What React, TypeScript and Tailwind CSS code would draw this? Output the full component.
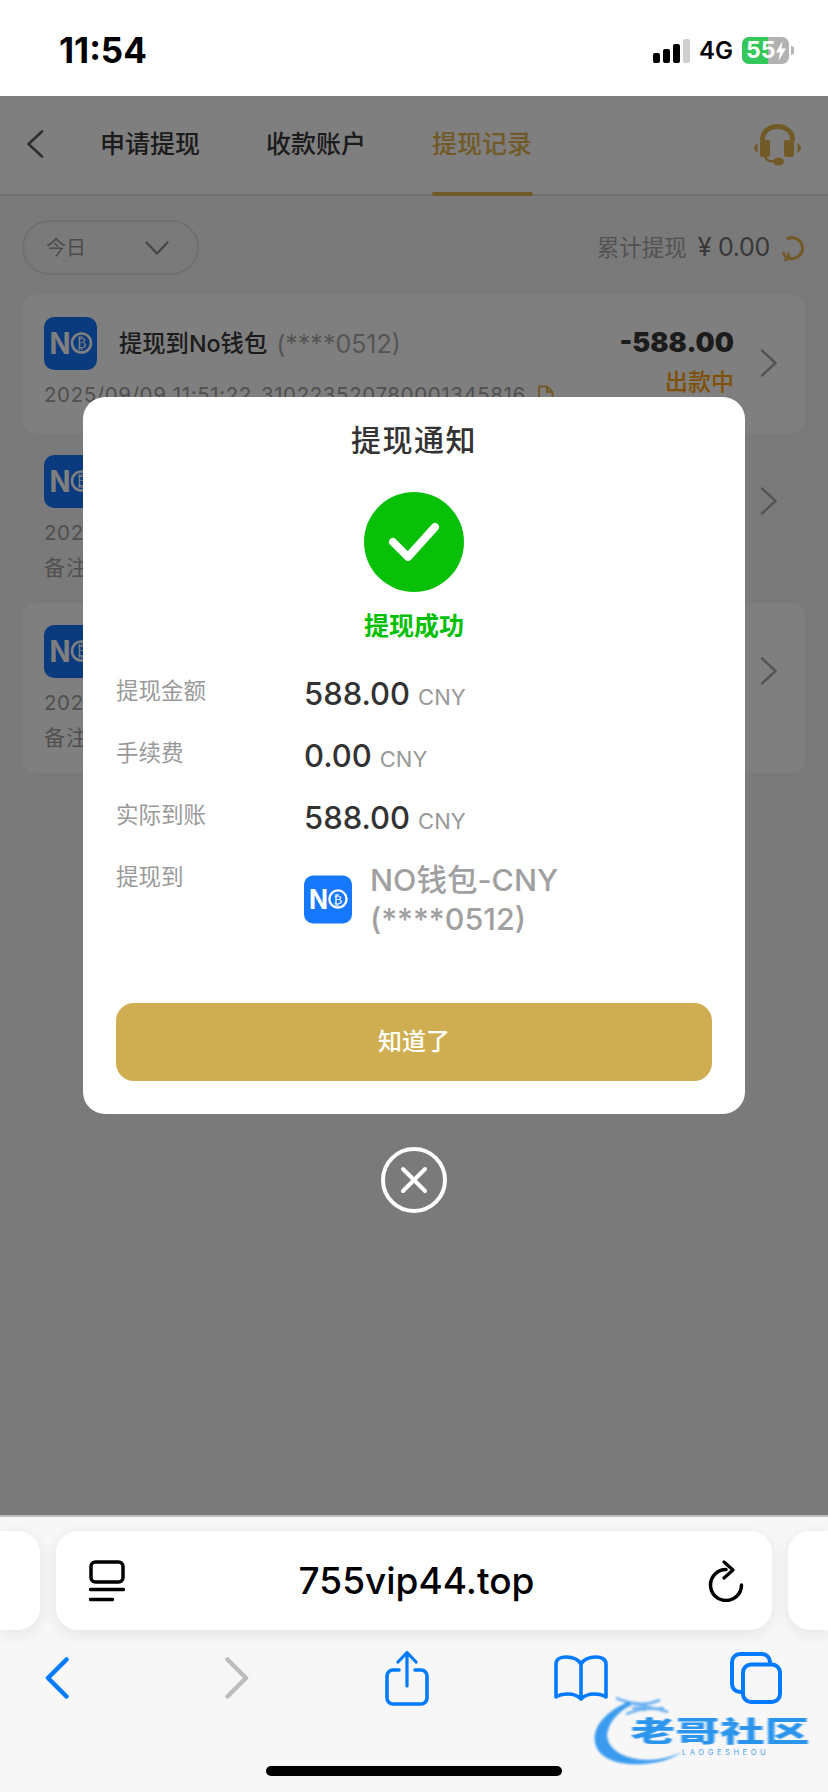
const records = [
  { date: '2025/09/09 11:51:22', no: '310223520780001345816', note: '', striped: true },
  { date: '2025', no: 'second', note: '备注', striped: false },
  { date: '2025', no: 'third', note: '备注', striped: true },
]

const details = [
  { label: '提现金额', value: '588.00' },
  { label: '手续费', value: '0.00' },
  { label: '实际到账', value: '588.00' },
]

function NoLogo({ className }: { className: string }) {
  return (
    <svg viewBox="0 0 53 53" className={className}>
      <rect width="53" height="53" rx="10" fill="#1677ff" />
      <text x="5.5" y="37" textLength="21" lengthAdjust="spacingAndGlyphs" fontFamily="Inter" fontWeight="700" fontSize="30" fill="#fff">
        N
      </text>
      <circle cx="37.5" cy="26" r="9.5" fill="none" stroke="#fff" strokeWidth="2.6" />
      <text x="37.5" y="31" textAnchor="middle" fontFamily="DejaVu Sans" fontSize="14" fill="#fff">
        ₿
      </text>
    </svg>
  )
}

function StatusBar() {
  return (
    <div className="h-[96px] shrink-0 bg-white flex items-center justify-between pl-[59px] pr-[34px] pt-[5px]">
      <span className="text-[35px] font-bold text-black">11:54</span>
      <div className="flex items-center">
        <div className="flex items-end gap-[3px] h-[24px]">
          <div className="w-[7px] h-[10px] rounded-[2px] bg-black" />
          <div className="w-[7px] h-[14px] rounded-[2px] bg-black" />
          <div className="w-[7px] h-[19px] rounded-[2px] bg-black" />
          <div className="w-[7px] h-[24px] rounded-[2px] bg-[#cfcfcf]" />
        </div>
        <span className="ml-[9px] text-[24px] font-semibold text-black">4G</span>
        <div className="ml-[9px] relative w-[47px] h-[27px] rounded-[7px] bg-[#b2b2b2] overflow-hidden flex items-center">
          <div className="absolute inset-y-0 left-0 w-[26px] bg-[#34c759]" />
          <span className="relative pl-[4px] text-[23px] leading-none font-bold text-white">55</span>
          <svg viewBox="0 0 12 20" className="relative w-[12px] h-[20px]">
            <path d="M7.5 0 1 11.5h4L3.5 20 11 7.5H6.5z" fill="#fff" />
          </svg>
        </div>
        <div className="ml-[2px] w-[3px] h-[9px] rounded-r-[3px] bg-[#b2b2b2]" />
      </div>
    </div>
  )
}

function Header() {
  return (
    <div className="h-[100px] shrink-0 bg-white border-b-2 border-[#e2e2e2] flex items-center relative">
      <svg viewBox="0 0 18 28" className="absolute left-[26px] top-[34px] w-[18px] h-[28px]">
        <path d="M16 1.5 2.5 14 16 26.5" fill="none" stroke="#5c5c5c" strokeWidth="2.6" strokeLinecap="round" strokeLinejoin="round" />
      </svg>
      <div className="pl-[100px] flex gap-[66px] text-[25px] font-medium text-[#383838] h-full items-center">
        <span>申请提现</span>
        <span>收款账户</span>
        <div className="relative h-full flex items-center w-[101px] text-[#e4b450]">
          <span>提现记录</span>
          <div className="absolute left-0 right-0 bottom-[-2px] h-[4px] rounded-full bg-[#e4b450]" />
        </div>
      </div>
      <svg viewBox="0 0 47 42" className="absolute left-[754px] top-[28px] w-[47px] h-[42px]" fill="#e4b450">
        <path d="M8.5 17v-2a15 12.5 0 0 1 30 0v2" fill="none" stroke="#e4b450" strokeWidth="5" />
        <rect x="6" y="16" width="10" height="17" rx="2" />
        <rect x="30" y="16" width="10" height="17" rx="2" />
        <path d="M3.5 19C1 21 0 23 0 24s1 3 3.500 5z" />
        <path d="M43.500 19c2.500 2 3.500 4 3.500 5s-1 3-3.500 5z" />
        <path d="M11 31c0 5 3 6.500 9 6.500" fill="none" stroke="#e4b450" strokeWidth="2.500" strokeLinecap="round" />
        <ellipse cx="24.500" cy="37.500" rx="5.500" ry="4" />
      </svg>
    </div>
  )
}

function FilterRow() {
  return (
    <div className="h-[99px] shrink-0 flex items-center justify-between pl-[22px] pr-[23px] pt-[4px]">
      <div className="w-[177px] h-[55px] rounded-full border-2 border-[#e0e0e0] flex items-center pl-[22px] pr-[28px] justify-between text-[20px] text-[#999]">
        <span>今日</span>
        <svg viewBox="0 0 24 14" className="w-[24px] h-[14px]">
          <path d="M1.500 1.500 12 12.500 22.500 1.500" fill="none" stroke="#888" strokeWidth="2.200" strokeLinecap="round" strokeLinejoin="round" />
        </svg>
      </div>
      <div className="flex items-center text-[#a6a6a6]">
        <span className="text-[22.500px]">累计提现</span>
        <span className="ml-[11px] text-[25px] text-[#707070] tracking-[-0.3px]">¥ 0.00</span>
        <svg viewBox="0 0 24 26" className="ml-[11px] w-[24px] h-[26px]">
          <path d="M7 3.500A10.500 10.500 0 1 1 9 23.500" fill="none" stroke="#e4b450" strokeWidth="3" strokeLinecap="round" />
          <path d="M2.500 18c.5 2 1.500 3.500 3.500 4.500M4 25l5-1.500-2-5" fill="none" stroke="#e4b450" strokeWidth="2.600" strokeLinecap="round" />
        </svg>
      </div>
    </div>
  )
}

function RecordCard({ date, no, note, striped }: (typeof records)[number]) {
  return (
    <div
      className={`relative ml-[22px] mr-[23px] rounded-[14px] pl-[22px] pt-[22px] ${note ? 'h-[170px]' : 'h-[138px]'} ${striped ? 'bg-white' : ''}`}
    >
      <div className="flex items-center">
        <NoLogo className="w-[53px] h-[53px] shrink-0" />
        {!note && (
          <div className="flex items-center pt-[2px]">
            <span className="ml-[22px] text-[23.300px] font-medium text-[#383838]">提现到No钱包</span>
            <span className="ml-[9px] text-[25px] text-[#aaa]">(****0512)</span>
          </div>
        )}
      </div>
      <div className="mt-[11px] flex items-center text-[20.500px] leading-[28px] tracking-[0.6px] text-[#a0a0a0]">
        <span>{date}</span>
        {!note && (
          <>
            <span className="ml-[9px]">{no}</span>
            <svg viewBox="0 0 17 20" className="ml-[11px] w-[17px] h-[20px]">
              <path d="M2 1.500h8l5.500 5.500v11.500H2zM10 1.500V7h5.500" fill="none" stroke="#e4b450" strokeWidth="2" />
            </svg>
          </>
        )}
      </div>
      {note && <div className="mt-[7px] text-[21px] leading-[28px] tracking-[1px] text-[#a0a0a0]">{note}</div>}
      {!note && (
        <>
          <div className="absolute right-[71px] top-[31px] text-[27px] leading-[34px] font-black text-[#383838]">-588.00</div>
          <div className="absolute right-[71px] top-[72px] text-[23px] leading-[30px] font-medium text-[#ffa000]">出款中</div>
        </>
      )}
      <svg viewBox="0 0 18 28" className="absolute right-[27px] top-[54px] w-[18px] h-[28px]">
        <path d="M2 1.500 15.500 14 2 26.500" fill="none" stroke="#aaa" strokeWidth="2.500" strokeLinecap="round" strokeLinejoin="round" />
      </svg>
    </div>
  )
}

function WithdrawModal() {
  return (
    <div className="absolute inset-0 bg-black/50 flex flex-col items-center pt-[301px]">
      <div className="w-[662px] h-[717px] bg-white rounded-[22px] px-[33px] pt-[23px] flex flex-col">
        <div className="text-center text-[30px] leading-[40px] font-medium tracking-[1.500px] text-[#333]">提现通知</div>
        <div className="mt-[32px] self-center w-[100px] h-[100px] rounded-full bg-[#08c008] flex items-center justify-center">
          <svg viewBox="0 0 52 40" className="w-[52px] h-[40px]">
            <path d="M5 20 20 35 47 5" fill="none" stroke="#fff" strokeWidth="8" strokeLinecap="round" strokeLinejoin="round" />
          </svg>
        </div>
        <div className="mt-[17px] text-center text-[25px] leading-[34px] font-bold text-[#00c000]">提现成功</div>
        <div className="mt-[31px] flex flex-col">
          {details.map((d) => (
            <div key={d.label} className="flex h-[62px]">
              <span className="w-[188px] text-[22.500px] leading-[34px] text-[#999]">{d.label}</span>
              <div className="flex items-baseline gap-[8px] pt-[3px] leading-[34px]">
                <span className="text-[31px] font-medium text-[#333]">{d.value}</span>
                <span className="text-[22px] text-[#999]">CNY</span>
              </div>
            </div>
          ))}
          <div className="flex">
            <span className="w-[188px] text-[22.500px] leading-[34px] text-[#999]">提现到</span>
            <NoLogo className="w-[48px] h-[49px] mt-[15px] shrink-0" />
            <div className="ml-[18px] text-[30.500px] leading-[39px] font-medium text-[#a0a0a0]">
              NO钱包-CNY
              <br />
              (****0512)
            </div>
          </div>
        </div>
        <button className="mt-[65px] h-[78px] rounded-[18px] bg-[#cfae52] text-white text-[24px] font-medium">知道了</button>
      </div>
      <div className="mt-[33px] w-[66px] h-[66px] rounded-full border-[4px] border-white flex items-center justify-center">
        <svg viewBox="0 0 28 28" className="w-[28px] h-[28px]">
          <path d="M3 3l22 22M25 3 3 25" fill="none" stroke="#fff" strokeWidth="4" strokeLinecap="round" />
        </svg>
      </div>
    </div>
  )
}

function SafariBar() {
  return (
    <div className="relative h-[277px] shrink-0 bg-[#f7f7f7] border-t-2 border-[#bdbdbd] flex flex-col overflow-hidden">
      <div className="mt-[14px] flex gap-[16px]">
        <div className="w-[40px] h-[99px] rounded-r-[22px] bg-white shadow-[0_4px_16px_rgba(0,0,0,0.08)]" />
        <div className="w-[716px] h-[99px] rounded-[22px] bg-white shadow-[0_4px_16px_rgba(0,0,0,0.08)] flex items-center justify-between pl-[33px] pr-[28px]">
          <svg viewBox="0 0 36 42" className="w-[36px] h-[42px]">
            <rect x="2" y="2" width="32" height="20" rx="4.500" fill="none" stroke="#000" strokeWidth="3.500" />
            <path d="M1.500 29.500h33M1.500 39.500h22" stroke="#000" strokeWidth="3.500" strokeLinecap="round" />
          </svg>
          <span className="text-[37px] font-medium text-black">755vip44.top</span>
          <svg viewBox="0 0 36 42" className="w-[36px] h-[42px]">
            <path d="M18 9.500A15.500 15.500 0 1 0 33.500 25" fill="none" stroke="#000" strokeWidth="3.500" strokeLinecap="round" />
            <path d="M16 2l9 8-9 8" fill="none" stroke="#000" strokeWidth="3.200" strokeLinecap="round" strokeLinejoin="round" />
          </svg>
        </div>
        <div className="w-[40px] h-[99px] rounded-l-[22px] bg-white shadow-[0_4px_16px_rgba(0,0,0,0.08)]" />
      </div>

      <div className="mt-[20px] h-[56px] pl-[27px] pr-[42px] flex items-center justify-between">
        <div className="w-[60px] flex justify-center">
          <svg viewBox="0 0 26 42" className="w-[26px] h-[42px]">
            <path d="M22.500 2.500 4 21l18.500 18.500" fill="none" stroke="#007aff" strokeWidth="4.500" strokeLinecap="round" strokeLinejoin="round" />
          </svg>
        </div>
        <div className="w-[60px] flex justify-center translate-x-[5px]">
          <svg viewBox="0 0 26 42" className="w-[26px] h-[42px]">
            <path d="M3.500 2.500 22 21 3.500 39.500" fill="none" stroke="#bdbdbd" strokeWidth="4.500" strokeLinecap="round" strokeLinejoin="round" />
          </svg>
        </div>
        <div className="w-[60px] flex justify-center">
          <svg viewBox="0 0 44 56" className="w-[44px] h-[56px]">
            <path d="M14 20H8a6 6 0 0 0-6 6v22a6 6 0 0 0 6 6h28a6 6 0 0 0 6-6V26a6 6 0 0 0-6-6h-6" fill="none" stroke="#007aff" strokeWidth="3.600" strokeLinecap="round" />
            <path d="M22 36V2.500M13 12l9-9.500 9 9.500" fill="none" stroke="#007aff" strokeWidth="3.200" strokeLinecap="round" strokeLinejoin="round" />
          </svg>
        </div>
        <div className="w-[60px] flex justify-center">
          <svg viewBox="0 0 54 46" className="w-[54px] h-[46px]">
            <path
              d="M27 9C24 4 18 2 12 2 7 2 2 4 2 9v33c4-3 8-3 12-3 5 0 9 1 13 5 4-4 8-5 13-5 4 0 8 0 12 3V9c0-5-5-7-10-7-6 0-12 2-15 7zM27 9v34"
              fill="none"
              stroke="#007aff"
              strokeWidth="3.600"
              strokeLinejoin="round"
            />
          </svg>
        </div>
        <div className="w-[60px] flex justify-center">
          <svg viewBox="0 0 52 52" className="w-[52px] h-[52px]">
            <rect x="2" y="2" width="38" height="38" rx="8" fill="none" stroke="#007aff" strokeWidth="4" />
            <rect x="13" y="12.500" width="37" height="37.500" rx="8" fill="#f7f7f7" stroke="#007aff" strokeWidth="4" />
          </svg>
        </div>
      </div>

      <div className="mt-[60px] self-center w-[296px] h-[10px] rounded-full bg-black" />

      {/* forum watermark stamped over the toolbar */}
      <div className="absolute left-[590px] top-[173px] w-[226px] h-[80px]">
        <svg viewBox="0 0 226 80" className="absolute inset-0 w-[226px] h-[80px] blur-[0.8px]">
          <path d="M38 12C14 22 0 40 6 56c6 16 32 22 62 16 10-2 18-6 24-10-16 8-36 10-50 6C24 64 14 52 18 40c3-10 12-20 24-25z" fill="#3a9bee" />
          <path d="M26 8c14 6 30 8 44 2M38 12c12 4 28 6 40 10M42 18c10 0 22 2 32 0M36 24c8-2 14-6 20-4" fill="none" stroke="#2f93ec" strokeWidth="2.500" opacity="0.7" />
        </svg>
        <div className="absolute left-[40px] top-[27px] w-[180px] flex justify-center">
          <span className="text-[28px] leading-[30px] font-black text-[#2b94ec] scale-x-[1.6] blur-[0.6px] whitespace-nowrap">老哥社区</span>
        </div>
        <div className="absolute left-[92px] top-[59px] text-[7.500px] leading-[8px] tracking-[3.600px] text-[#4a9fe8]">LAOGESHEOU</div>
      </div>
    </div>
  )
}

export default function App() {
  return (
    <div className="w-[828px] h-[1792px] flex flex-col overflow-hidden font-['Inter','Noto_Sans_CJK_SC',sans-serif]">
      <StatusBar />
      <div className="relative flex-1 min-h-0 bg-[#f5f5f5] overflow-hidden">
        <Header />
        <FilterRow />
        {records.map((r) => (
          <RecordCard key={r.no} {...r} />
        ))}
        <WithdrawModal />
      </div>
      <SafariBar />
    </div>
  )
}
